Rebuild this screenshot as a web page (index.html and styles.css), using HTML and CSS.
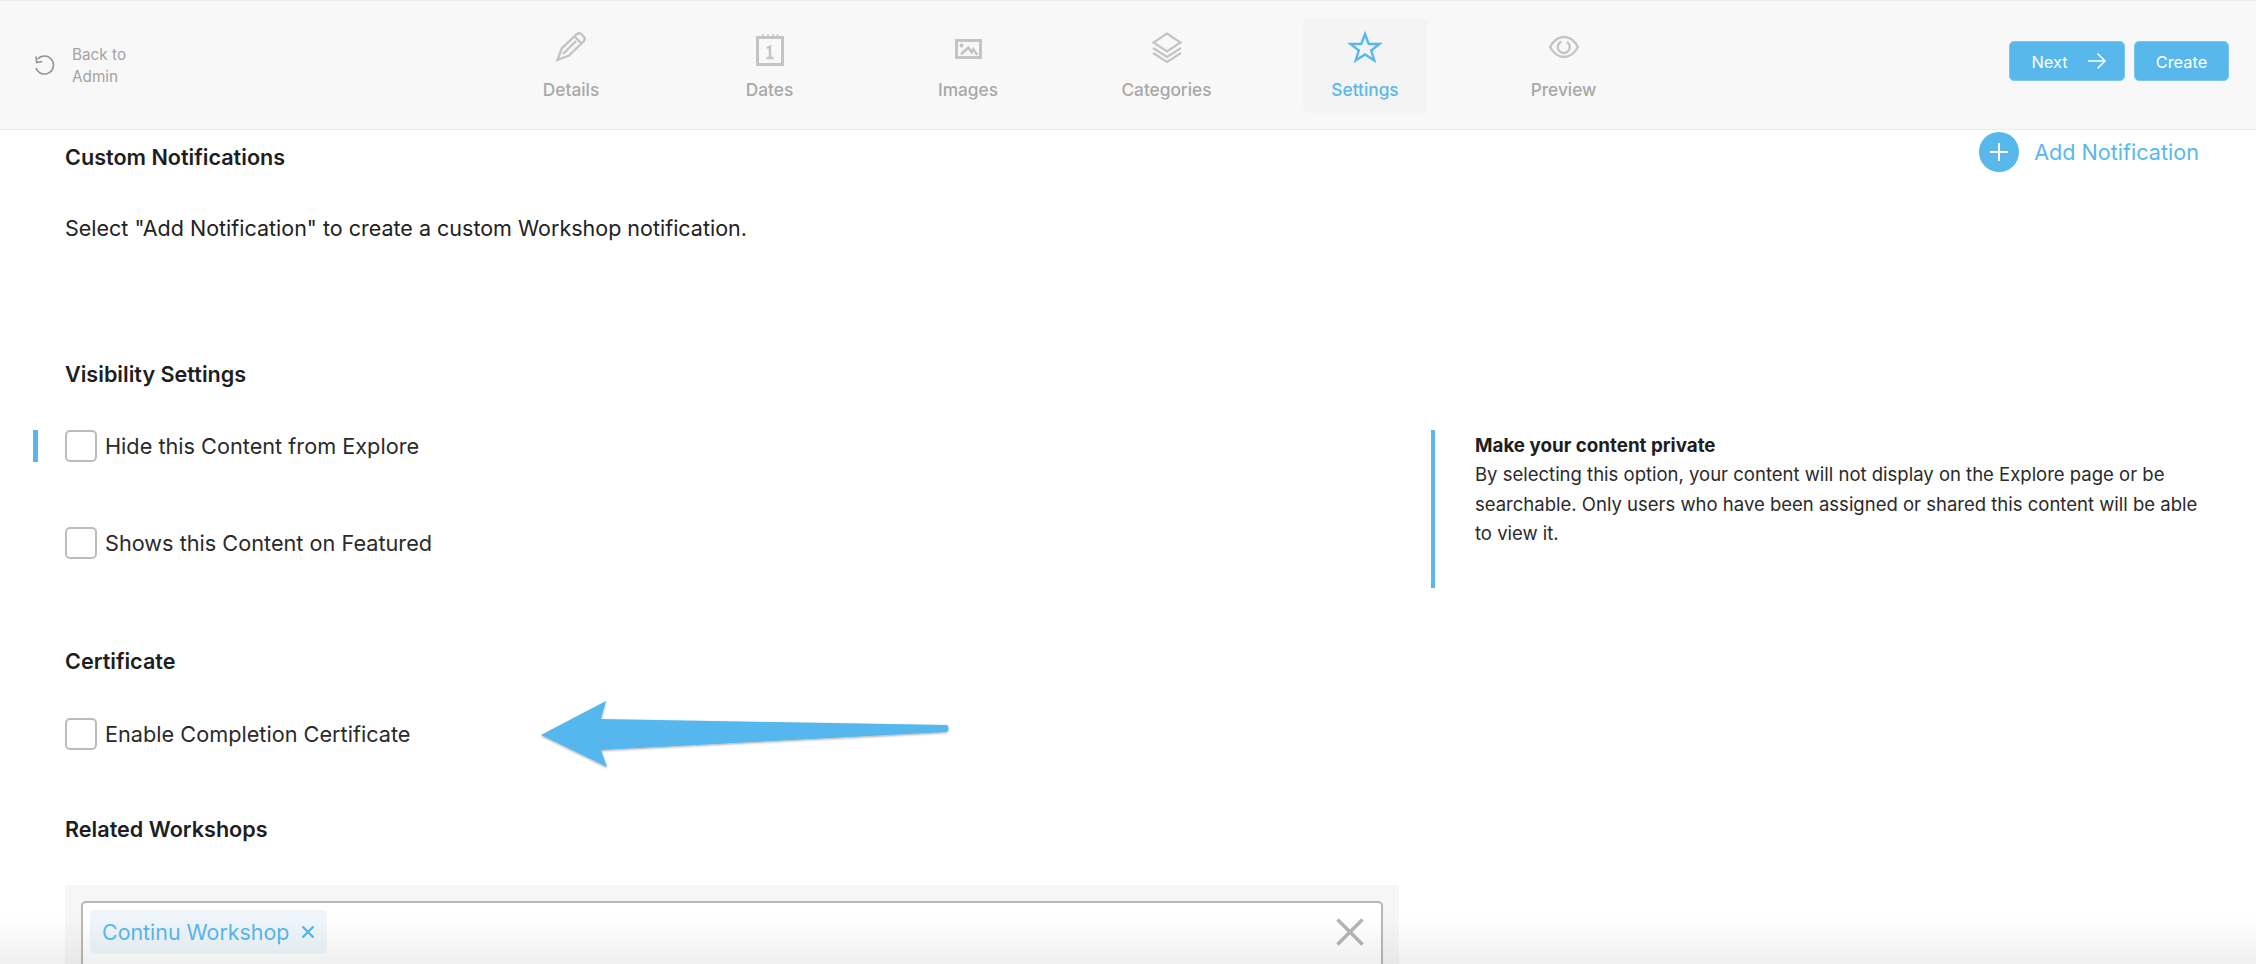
FILE: index.html
```html
<!DOCTYPE html>
<html lang="en">
<head>
<meta charset="utf-8">
<title>Workshop settings</title>
<link rel="stylesheet" href="styles.css">
</head>
<body>
<div class="page">
  <header class="topbar">
    <a class="back">
      <svg class="back-icon" viewBox="0 0 22 22" width="22" height="22" fill="none" stroke="#949494" stroke-width="1.600"><path d="M4.800 6A9 9 0 1 1 3 15"/><path d="M2.800 3.500l1 6 5.500-1"/></svg>
      <span class="back-text">Back to<br>Admin</span>
    </a>
    <nav class="tabs">
      <div class="tab">
        <svg class="ico" viewBox="0 0 40 38" width="40" height="38" stroke-width="2.400"><path d="M6.500 32L10.700 20.500 26 6Q28 4.500 30 6L33 9Q34.500 11 33 13L18 27.500Z"/><path d="M23.500 8.500L31 16M12 26L25 13"/></svg>
        <span>Details</span>
      </div>
      <div class="tab">
        <svg class="ico" viewBox="0 0 40 38" width="40" height="38" stroke-width="3"><rect x="7.500" y="9.500" width="25" height="27"/><path d="M13 6v5M18 6v5M23 6v5M27.500 6v5" stroke-width="1.500"/><path d="M17 20L20 18.700V30M16.500 30h7" stroke-width="2.400"/></svg>
        <span>Dates</span>
      </div>
      <div class="tab">
        <svg class="ico" viewBox="0 0 40 38" width="40" height="38" stroke-width="3"><rect x="8.500" y="12.500" width="24" height="17"/><circle class="ico-dot" cx="13.500" cy="17.500" r="2"/><path d="M13 26.300L20.300 19.700 23.700 24.300 25.300 21.300 29.300 27" stroke-width="2.500"/></svg>
        <span>Images</span>
      </div>
      <div class="tab">
        <svg class="ico" viewBox="0 0 40 38" width="40" height="38" stroke-width="2.200"><path d="M20 5.500L33.500 14.500 20 23.500 6.500 14.500Z"/><path d="M6 20L20 29 34 20M6 25L20 34 34 25"/></svg>
        <span>Categories</span>
      </div>
      <div class="tab tab-active">
        <svg class="ico" viewBox="0 0 40 38" width="40" height="38" stroke-width="2.400"><path d="M20 6L23.700 16H34.500L26.200 22.500 29.300 32.500 20 26.500 10.700 32.500 13.800 22.500 5.500 16H16.300Z"/></svg>
        <span>Settings</span>
      </div>
      <div class="tab">
        <svg class="ico" viewBox="0 0 40 38" width="40" height="38" stroke-width="2.400"><path d="M6 19C10 12 15 9 20 9S30 12 34 19C30 26 25 29 20 29S10 26 6 19Z"/><path d="M17.500 13.500A6 6 0 1 0 23 14"/></svg>
        <span>Preview</span>
      </div>
    </nav>
    <div class="actions">
      <button class="btn btn-next">Next
        <svg viewBox="0 0 20 20" width="20" height="20" fill="none" stroke="#fff" stroke-width="1.500"><path d="M1 10h17M10.500 2.500L18 10l-7.500 7.500"/></svg>
      </button>
      <button class="btn btn-create">Create</button>
    </div>
  </header>

  <main class="content">
    <section class="notif">
      <div class="notif-head">
        <h2 class="title title-first">Custom Notifications</h2>
        <a class="add">
          <span class="add-circle"><svg viewBox="0 0 20 20" width="20" height="20" fill="none" stroke="#fff" stroke-width="2"><path d="M10 1v18M1 10h18"/></svg></span>
          <span>Add Notification</span>
        </a>
      </div>
      <p class="hint">Select "Add Notification" to create a custom Workshop notification.</p>
    </section>

    <section class="visibility">
      <h2 class="title">Visibility Settings</h2>
      <div class="vis-grid">
        <div class="vis-left">
          <label class="check check-focus"><span class="box"></span><span>Hide this Content from Explore</span></label>
          <label class="check check-second"><span class="box"></span><span>Shows this Content on Featured</span></label>
        </div>
        <aside class="note">
          <strong>Make your content private</strong>
          <p>By selecting this option, your content will not display on the Explore page or be searchable. Only users who have been assigned or shared this content will be able to view it.</p>
        </aside>
      </div>
    </section>

    <section class="certificate">
      <h2 class="title">Certificate</h2>
      <label class="check check-cert"><span class="box"></span><span>Enable Completion Certificate</span></label>
    </section>

    <section class="related">
      <h2 class="title">Related Workshops</h2>
      <div class="picker">
        <div class="picker-input">
          <span class="chip">Continu Workshop
            <svg viewBox="0 0 14 14" width="14" height="14" fill="none" stroke="#58b8ec" stroke-width="2.400"><path d="M1.500 1.500l11 11M12.500 1.500l-11 11"/></svg>
          </span>
          <svg class="clear" viewBox="0 0 28 28" width="28" height="28" fill="none" stroke="#b5b5b5" stroke-width="3.500"><path d="M1.500 1.500l25 25M26.500 1.500l-25 25"/></svg>
        </div>
      </div>
    </section>
  </main>

  <svg class="arrow" viewBox="0 0 420 70" width="420" height="70"><defs><filter id="sh" x="-5%" y="-20%" width="110%" height="140%"><feDropShadow dx="0" dy="1" stdDeviation="0.800" flood-color="#000" flood-opacity=".35"/></filter></defs><path filter="url(#sh)" fill="#55b7ed" d="M1 35L66 1 61 19 407 25Q410 28 407 32L61 50 67 67z"/></svg>
  <div class="fade"></div>
</div>
</body>
</html>
```

FILE: styles.css
```css
* { box-sizing: border-box; }
html, body { margin: 0; padding: 0; background: #fff; }
body { font-family: Inter, "Noto Sans", sans-serif; color: #222; }
.page { position: relative; width: 2256px; height: 964px; overflow: hidden; }

.topbar {
  height: 130px;
  display: flex;
  align-items: center;
  background: #f8f8f8;
  border-top: 1px solid #eeeeee;
  border-bottom: 1px solid #ececec;
  padding-left: 33px;
}
.back { width: 476px; display: flex; align-items: center; gap: 17px; color: #a3a3a3; font-size: 15.300px; line-height: 22px; }
.back-icon { display: block; margin-top: -2px; }
.back-text { margin-top: 2px; }
.tabs { display: flex; gap: 74.500px; align-items: flex-start; margin-top: 1px; }
.tab {
  width: 124px; height: 95px;
  display: flex; flex-direction: column; align-items: center; justify-content: flex-start;
  border-radius: 5px;
  color: #a8a8a8; font-size: 17.280px; font-weight: 500; line-height: 20px;
}
.ico { display: block; margin-top: 10px; margin-bottom: 14px; fill: none; stroke: #c4c4c4; }
.ico-dot { fill: #c4c4c4; stroke: none; }
.tab-active { background: #f4f4f4; color: #58b8ec; }
.tab-active .ico { stroke: #58b8ec; }
.actions { margin-left: auto; margin-right: 27px; display: flex; gap: 9px; margin-top: -9px; }
.btn {
  height: 40px; border: 1px solid #7cc8f0; border-radius: 5px; background: #58b8ec;
  color: #fff; font: 400 16.400px Inter, sans-serif; padding: 2px 0 0;
  display: flex; align-items: center; justify-content: center;
}
.btn-next { width: 116px; gap: 19px; padding-left: 4px; }
.btn-next svg { margin-top: -2px; }
.btn-create { width: 95px; }

.content { padding: 0 45px 0 65px; }
.title { margin: 0; font-size: 21.600px; line-height: 24px; font-weight: 600; color: #1e1e1e; }
.notif-head { display: flex; justify-content: space-between; align-items: flex-start; }
.title-first { margin-top: 15px; }
.add { display: flex; align-items: center; gap: 15px; margin: 2px 12px 0 0; color: #58b8ec; font-size: 21.600px; line-height: 40px; }
.add-circle { width: 40px; height: 40px; border-radius: 50%; background: #58b8ec; display: flex; align-items: center; justify-content: center; }
.add-circle svg { display: block; }
.hint { margin: 42px 0 0; font-size: 21.500px; line-height: 28px; color: #222; }

.visibility { margin-top: 120px; }
.vis-grid { display: flex; align-items: flex-start; margin-top: 44px; }
.vis-left { width: 1366px; }
.check { display: flex; align-items: center; gap: 8px; height: 32px; font-size: 21.700px; color: #2a2a2a; position: relative; }
.box { width: 32px; height: 32px; border: 2px solid #bcbcbc; border-radius: 5px; background: #fff; flex: none; }
.check-focus::before { content: ""; position: absolute; left: -32px; top: 0; width: 5px; height: 32px; background: #58b8ec; }
.check-second { margin-top: 65px; }
.note { width: 780px; flex: none; height: 158px; border-left: 4px solid #58b8ec; padding: 2px 0 0 40px; font-size: 18.500px; line-height: 29.500px; color: #2a2a2a; }
.note strong { display: block; font-size: 18.800px; font-weight: 700; color: #1e1e1e; line-height: 28px; }
.note p { margin: 0; }

.certificate { margin-top: 61px; }
.check-cert { margin-top: 45px; }
.related { margin-top: 67px; }
.picker { margin-top: 44px; width: 1334px; height: 120px; background: #f6f6f6; padding: 16px; }
.picker-input { height: 100px; background: #fff; border: 2px solid #b8b8b8; border-radius: 5px; padding: 7px; display: flex; align-items: flex-start; justify-content: space-between; }
.chip { height: 44px; width: 237px; padding: 0 12px; background: #eef6fb; border-radius: 5px; color: #58b8ec; font-size: 21.400px; display: flex; align-items: center; justify-content: space-between; }
.clear { margin-top: 8px; margin-right: 10px; }

.arrow { position: absolute; left: 540px; top: 700px; }
.fade { position: absolute; left: 0; right: 0; bottom: 0; height: 48px; background: linear-gradient(to bottom, rgba(0,0,0,0), rgba(0,0,0,.06)); pointer-events: none; }
```
